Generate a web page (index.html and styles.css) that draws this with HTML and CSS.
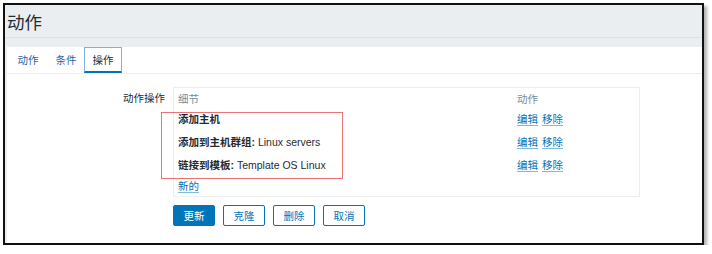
FILE: index.html
```html
<!DOCTYPE html>
<html lang="zh-CN">
  <head>
    <meta charset="UTF-8" />
    <title>动作</title>
    <link rel="stylesheet" href="styles.css">
  </head>
  <body>
    <div class="frame">
      <header class="page-header">
        <h1>动作</h1>
      </header>

      <div class="panel">
        <ul class="tabs">
          <li class="tab">动作</li>
          <li class="tab">条件</li>
          <li class="tab active">操作</li>
        </ul>

        <div class="form-row">
          <label class="form-label">动作操作</label>
          <div class="ops">
            <div class="ops-row ops-head">
              <span>细节</span>
              <span>动作</span>
            </div>
            <div class="ops-row">
              <span><b>添加主机</b></span>
              <span class="actions"><a href="#">编辑</a><a href="#">移除</a></span>
            </div>
            <div class="ops-row">
              <span><b>添加到主机群组:</b> Linux servers</span>
              <span class="actions"><a href="#">编辑</a><a href="#">移除</a></span>
            </div>
            <div class="ops-row">
              <span><b>链接到模板:</b> Template OS Linux</span>
              <span class="actions"><a href="#">编辑</a><a href="#">移除</a></span>
            </div>
            <div class="ops-new"><a href="#">新的</a></div>
            <!-- 标注框 -->
            <div class="highlight"></div>
          </div>
        </div>

        <div class="buttons">
          <button class="btn primary">更新</button>
          <button class="btn">克隆</button>
          <button class="btn">删除</button>
          <button class="btn">取消</button>
        </div>
      </div>
    </div>
  </body>
</html>
```

FILE: styles.css
```css
body {
  margin: 0;
  background: #fff;
  font-family: "Liberation Sans", Arial, "Noto Sans CJK SC", sans-serif;
  font-size: 10.5px;
  color: #1f2c33;
}

.frame {
  margin: 3px 0 0 3px;
  width: 697px;
  height: 238px;
  border: 2px solid #111;
  background: #ebeef0;
  box-shadow: 3px 3px 3px rgba(0, 0, 0, 0.3);
  display: flex;
  flex-direction: column;
}

.page-header {
  height: 32px;
  border-bottom: 1px solid #dde2e5;
  margin-bottom: 9px;
  padding-left: 2px;
}

h1 {
  margin: 0;
  font-size: 17.5px;
  font-weight: normal;
  line-height: 36px;
  color: #1f2c33;
}

.panel {
  flex: 1;
  margin-left: 2px;
  background: #fff;
}

.tabs {
  list-style: none;
  margin: 0;
  padding: 0 0 0 2px;
  display: flex;
  height: 26px;
  border-bottom: 1px solid #ebeef0;
}

.tab {
  width: 38px;
  height: 26px;
  box-sizing: border-box;
  text-align: center;
  line-height: 26px;
  color: #1f65a6;
}

.tab.active {
  color: #1f2c33;
  border: 1px solid #7fb0e6;
  border-bottom: 2px solid #0275b8;
  line-height: 24px;
  margin-left: -1px;
}

.form-row {
  display: flex;
  margin-top: 13px;
}

.form-label {
  width: 166px;
  padding-right: 8px;
  box-sizing: border-box;
  text-align: right;
  line-height: 20px;
  padding-top: 1px;
}

.ops {
  position: relative;
  width: 467px;
  height: 110px;
  box-sizing: border-box;
  border: 1px solid #ebeef0;
  padding: 1px 0 0 4px;
}

.ops-row {
  display: grid;
  grid-template-columns: 339px 1fr;
  height: 23px;
  line-height: 23px;
}

.ops-head {
  height: 19px;
  line-height: 20px;
  color: #768d99;
}

.actions a {
  margin-right: 4px;
}

a {
  color: #0275b8;
  text-decoration: none;
  border-bottom: 1px solid rgba(2, 117, 184, 0.5);
}

.ops-new {
  line-height: 18px;
}

.highlight {
  position: absolute;
  left: -13px;
  top: 24px;
  width: 180px;
  height: 65px;
  border: 1px solid #ec7373;
}

.buttons {
  display: flex;
  gap: 8px;
  margin: 8px 0 0 166px;
}

.btn {
  width: 42px;
  height: 21px;
  padding: 0;
  font-family: inherit;
  font-size: 10.5px;
  color: #0275b8;
  background: #fff;
  border: 1px solid #0275b8;
  border-radius: 2px;
}

.btn.primary {
  color: #fff;
  background: #0275b8;
}
```
